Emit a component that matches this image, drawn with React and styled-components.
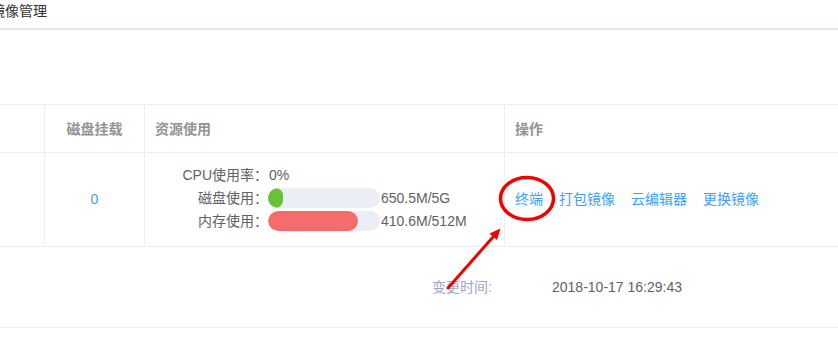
import React from "react";
import styled, { createGlobalStyle } from "styled-components";

const Global = createGlobalStyle`
  html, body { margin: 0; padding: 0; background: #fff; }
  body {
    font-family: "Liberation Sans", "Noto Sans CJK SC", sans-serif;
    font-size: 14px;
    color: #606266;
    overflow: hidden;
  }
`;

const Page = styled.div`
  position: relative;
  width: 838px;
  height: 356px;
  overflow: hidden;
`;

const TopBar = styled.div`
  height: 28px;
  border-bottom: 2px solid #e4e7ed;
  display: flex;
  align-items: center;
`;

const Title = styled.span`
  margin-left: -9px;
  font-size: 14px;
  line-height: 20px;
  color: #303133;
  margin-top: -6px;
`;

const Table = styled.div`
  margin-top: 74px;
  display: grid;
  grid-template-columns: 45px 100px 360px 1fr;
  border-top: 1px solid #ebeef5;
`;

const HeadCell = styled.div`
  height: 47px;
  border-bottom: 1px solid #ebeef5;
  border-right: ${(p) => (p.$last ? "none" : "1px solid #ebeef5")};
  display: flex;
  align-items: center;
  justify-content: ${(p) => (p.$center ? "center" : "flex-start")};
  padding-left: ${(p) => (p.$center ? "0" : "10px")};
  color: #909399;
  font-weight: bold;
  font-size: 14px;
  line-height: 20px;
`;

const BodyCell = styled.div`
  height: 93px;
  border-bottom: 1px solid #ebeef5;
  border-right: ${(p) => (p.$last ? "none" : "1px solid #ebeef5")};
  display: flex;
  align-items: center;
  justify-content: ${(p) => (p.$center ? "center" : "flex-start")};
  padding-left: ${(p) => (p.$center ? "0" : "10px")};
  line-height: 20px;
`;

const Count = styled.span`
  color: #409eff;
  margin-top: -2px;
`;

const ResourceGrid = styled.div`
  display: grid;
  grid-template-columns: 113px 112px auto;
  grid-auto-rows: 20px;
  row-gap: 3px;
  align-items: center;
  margin-top: -3px;
`;

const Label = styled.span`
  text-align: right;
  white-space: nowrap;
  line-height: 20px;
`;

const Value = styled.span`
  white-space: nowrap;
  line-height: 20px;
  padding-left: 1px;
  grid-column: ${(p) => (p.$span ? "2 / span 2" : "auto")};
`;

const Track = styled.div`
  height: 20px;
  border-radius: 10px;
  background: #ebeef5;
  overflow: hidden;
`;

const Fill = styled.div`
  height: 100%;
  border-radius: 10px;
  background: ${(p) => p.$color};
`;

const Actions = styled.div`
  display: flex;
  gap: 16px;
  margin-top: -2px;
`;

const ActionLink = styled.a`
  color: #409eff;
  text-decoration: none;
  white-space: nowrap;
  line-height: 20px;
  cursor: pointer;
`;

const DetailRow = styled.div`
  height: 80px;
  border-bottom: 1px solid #ebeef5;
  display: grid;
  grid-template-columns: 120px auto;
  align-items: center;
  padding-left: 432px;
`;

const DetailLabel = styled.span`
  color: #99a9bf;
  line-height: 20px;
`;

const DetailValue = styled.span`
  color: #606266;
  line-height: 20px;
`;

const Annotation = styled.svg`
  position: absolute;
  left: 0;
  top: 0;
  pointer-events: none;
`;

const resources = [
  { label: "磁盘使用：", used: 650.5, total: 5120, text: "650.5M/5G", color: "#67c23a" },
  { label: "内存使用：", used: 410.6, total: 512, text: "410.6M/512M", color: "#f56c6c" },
];

const TRACK = 112;

export default function App() {
  return (
    <Page>
      <Global />
      <TopBar>
        <Title>镜像管理</Title>
      </TopBar>
      <Table>
        <HeadCell />
        <HeadCell $center>磁盘挂载</HeadCell>
        <HeadCell>资源使用</HeadCell>
        <HeadCell $last>操作</HeadCell>

        <BodyCell />
        <BodyCell $center>
          <Count>0</Count>
        </BodyCell>
        <BodyCell>
          <ResourceGrid>
            <Label>CPU使用率：</Label>
            <Value $span>0%</Value>
            {resources.map((r) => (
              <React.Fragment key={r.label}>
                <Label>{r.label}</Label>
                <Track>
                  <Fill
                    $color={r.color}
                    style={{ width: Math.max(15, Math.round((r.used / r.total) * TRACK)) + "px" }}
                  />
                </Track>
                <Value>{r.text}</Value>
              </React.Fragment>
            ))}
          </ResourceGrid>
        </BodyCell>
        <BodyCell $last>
          <Actions>
            <ActionLink>终端</ActionLink>
            <ActionLink>打包镜像</ActionLink>
            <ActionLink>云编辑器</ActionLink>
            <ActionLink>更换镜像</ActionLink>
          </Actions>
        </BodyCell>
      </Table>
      <DetailRow>
        <DetailLabel>变更时间:</DetailLabel>
        <DetailValue>2018-10-17 16:29:43</DetailValue>
      </DetailRow>

      <Annotation width="838" height="356" viewBox="0 0 838 356">
        <ellipse cx="527" cy="198.5" rx="26.5" ry="21" fill="none" stroke="#f20000" strokeWidth="3.5" />
        <line x1="448" y1="288" x2="493" y2="237" stroke="#f20000" strokeWidth="3" strokeLinecap="round" />
        <polygon points="500.5,228.5 497,240 489.5,233.5" fill="#f20000" />
      </Annotation>
    </Page>
  );
}
